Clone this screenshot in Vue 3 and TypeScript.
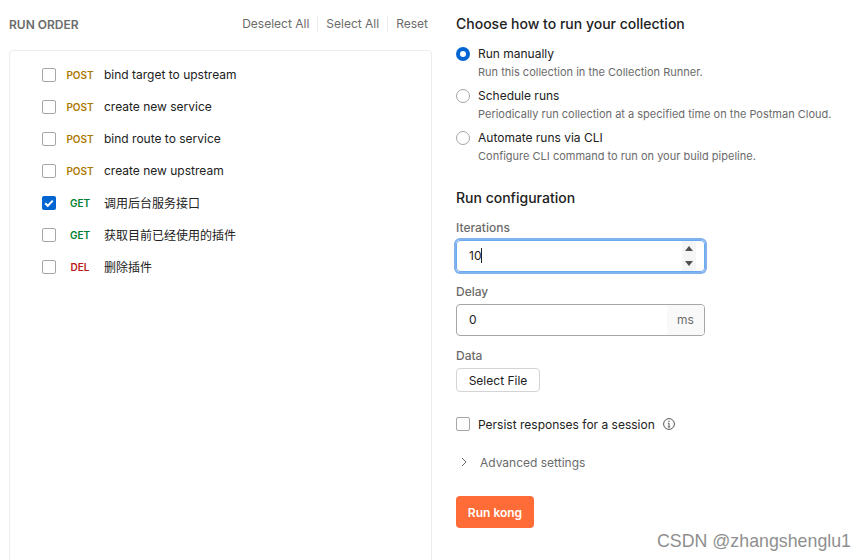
<script setup lang="ts">
interface Req { method: string; name: string; checked: boolean }
const requests: Req[] = [
  { method: 'POST', name: 'bind target to upstream', checked: false },
  { method: 'POST', name: 'create new service', checked: false },
  { method: 'POST', name: 'bind route to service', checked: false },
  { method: 'POST', name: 'create new upstream', checked: false },
  { method: 'GET', name: '调用后台服务接口', checked: true },
  { method: 'GET', name: '获取目前已经使用的插件', checked: false },
  { method: 'DEL', name: '删除插件', checked: false },
]
const modes = [
  { title: 'Run manually', desc: 'Run this collection in the Collection Runner.', on: true },
  { title: 'Schedule runs', desc: 'Periodically run collection at a specified time on the Postman Cloud.', on: false },
  { title: 'Automate runs via CLI', desc: 'Configure CLI command to run on your build pipeline.', on: false },
]
</script>

<template>
  <div class="page">
    <section class="left">
      <header class="left-head">
        <span class="run-order">RUN ORDER</span>
        <div class="actions">
          <span class="action">Deselect All</span>
          <span class="action">Select All</span>
          <span class="action">Reset</span>
        </div>
      </header>
      <div class="card">
        <div v-for="r in requests" :key="r.name" class="row">
          <span class="box" :class="{ checked: r.checked }">
            <svg v-if="r.checked" width="14" height="14" viewBox="0 0 14 14">
              <path d="M3.2 7.2 5.8 9.8 10.8 4.6" fill="none" stroke="#fff" stroke-width="2" />
            </svg>
          </span>
          <span class="method" :class="r.method.toLowerCase()">{{ r.method }}</span>
          <span class="name">{{ r.name }}</span>
        </div>
      </div>
    </section>

    <section class="right">
      <h2 class="title">Choose how to run your collection</h2>
      <div class="modes">
        <div v-for="m in modes" :key="m.title" class="mode">
          <span class="radio" :class="{ on: m.on }"></span>
          <div>
            <div class="mode-title">{{ m.title }}</div>
            <div class="mode-desc">{{ m.desc }}</div>
          </div>
        </div>
      </div>

      <h2 class="title config">Run configuration</h2>
      <div class="label first">Iterations</div>
      <div class="input focus">
        <span class="value">10<i class="caret"></i></span>
        <span class="spin">
          <svg width="8" height="5" viewBox="0 0 8 5"><path d="M4 0 8 5H0Z" fill="#505050" /></svg>
          <svg width="8" height="5" viewBox="0 0 8 5"><path d="M0 0H8L4 5Z" fill="#505050" /></svg>
        </span>
      </div>
      <div class="label">Delay</div>
      <div class="input">
        <span class="value">0</span>
        <span class="unit">ms</span>
      </div>
      <div class="label">Data</div>
      <button class="file" type="button">Select File</button>

      <div class="persist">
        <span class="box"></span>
        <span class="persist-text">Persist responses for a session</span>
        <svg class="info" width="12" height="12" viewBox="0 0 12 12" fill="none" stroke="#555">
          <circle cx="6" cy="6" r="5.4" />
          <path d="M6 5.2V9M4.8 9H7.2M4.9 5.3H6" />
          <path d="M6 2.8V4" stroke-width="1.2" />
        </svg>
      </div>

      <div class="advanced">
        <svg width="8" height="10" viewBox="0 0 8 10" fill="none" stroke="#6b6b6b">
          <path d="M2 1 6 5 2 9" />
        </svg>
        <span>Advanced settings</span>
      </div>

      <button class="run" type="button">Run kong</button>
    </section>

    <div class="watermark">CSDN @zhangshenglu1</div>
  </div>
</template>

<style>
html, body { margin: 0; background: #fff; overflow: hidden; }
</style>

<style scoped>
.page {
  position: relative;
  display: flex;
  width: 866px;
  height: 560px;
  overflow: hidden;
  background: #fff;
  font-family: Inter, "Noto Sans CJK SC", sans-serif;
  font-size: 12px;
  color: #212121;
}
.left {
  width: 432px;
  padding-left: 9px;
  box-sizing: border-box;
  flex: none;
}
.left-head {
  display: flex;
  justify-content: space-between;
  align-items: center;
  height: 16px;
  margin-top: 16px;
  padding-right: 4px;
}
.run-order { font-size: 12px; font-weight: 600; color: #6b6b6b; }
.actions { display: flex; }
.action {
  color: #6b6b6b;
  line-height: 16px;
  padding: 0 8px;
  border-left: 1px solid #ededed;
}
.action:first-child { border-left: 0; }
.action:last-child { padding-right: 0; }
.card {
  margin-top: 18px;
  height: 540px;
  padding-top: 8px;
  box-sizing: border-box;
  border: 1px solid #ededed;
  border-radius: 4px;
}
.row {
  display: flex;
  align-items: center;
  height: 32px;
  padding-left: 32px;
}
.box {
  display: block;
  flex: none;
  width: 14px;
  height: 14px;
  box-sizing: border-box;
  border: 1px solid #a6a6a6;
  border-radius: 2px;
  background: #fff;
}
.box.checked { position: relative; border: 0; background: #0265d2; }
.box.checked svg { display: block; }
.method {
  width: 48px;
  flex: none;
  text-align: center;
  font-size: 10px;
  font-weight: 600;
}
.post { color: #ad7a03; }
.get { color: #007f31; }
.del { color: #b91c1c; }
.name { color: #212121; padding-bottom: 2px; }
.right {
  padding-left: 24px;
  flex: 1;
}
.title {
  margin: 16px 0 0;
  font-size: 14px;
  line-height: 16px;
  font-weight: 500;
  color: #212121;
}
.modes { margin-top: 14px; display: flex; flex-direction: column; gap: 8px; }
.mode { display: flex; gap: 8px; }
.radio {
  flex: none;
  width: 14px;
  height: 14px;
  margin-top: 1px;
  box-sizing: border-box;
  border: 1px solid #a6a6a6;
  border-radius: 50%;
}
.radio.on { border: 4px solid #0265d2; }
.mode-title { line-height: 16px; }
.mode-desc { font-size: 11px; line-height: 16px; margin-top: 2px; color: #6b6b6b; }
.config { margin-top: 26px; }
.label { margin-top: 12px; font-weight: 500; line-height: 16px; color: #6b6b6b; }
.label.first { margin-top: 14px; }
.input {
  display: flex;
  justify-content: space-between;
  width: 249px;
  height: 32px;
  margin-top: 4px;
  box-sizing: border-box;
  border: 1px solid #a6a6a6;
  border-radius: 4px;
  overflow: hidden;
}
.input.focus {
  border: 1px solid #6ca8f0;
  box-shadow: 0 0 0 2px #80b3ee;
}
.value { padding-left: 12px; line-height: 30px; color: #212121; }
.caret {
  display: inline-block;
  width: 1px;
  height: 15px;
  background: #212121;
  vertical-align: -3px;
}
.spin {
  width: 14px;
  margin-right: 8px;
  background: #f5f5f5;
  display: flex;
  flex-direction: column;
  align-items: center;
  justify-content: space-between;
  padding: 5px 0;
  box-sizing: border-box;
}
.spin svg { display: block; }
.unit {
  width: 37px;
  text-align: center;
  line-height: 30px;
  color: #6b6b6b;
  background: #f9f9f9;
}
.file {
  display: block;
  width: 84px;
  height: 24px;
  margin-top: 4px;
  padding: 0;
  font: inherit;
  color: #212121;
  background: #fff;
  border: 1px solid #d4d4d4;
  border-radius: 4px;
}
.persist { display: flex; align-items: center; margin-top: 24px; height: 16px; }
.persist-text { margin-left: 8px; }
.info { margin-left: 8px; }
.advanced {
  display: flex;
  align-items: center;
  margin-top: 22px;
  height: 16px;
  padding-left: 4px;
  color: #6b6b6b;
}
.advanced span { margin-left: 12px; }
.run {
  display: block;
  width: 78px;
  height: 32px;
  margin-top: 26px;
  padding: 0;
  border: 0;
  border-radius: 4px;
  background: #ff6c37;
  color: #fff;
  font: inherit;
  font-weight: 600;
}
.watermark {
  position: absolute;
  left: 657px;
  top: 531px;
  font-family: "Liberation Sans", sans-serif;
  font-size: 17.8px;
  line-height: 20px;
  color: #8f8f8f;
  white-space: nowrap;
}
</style>
